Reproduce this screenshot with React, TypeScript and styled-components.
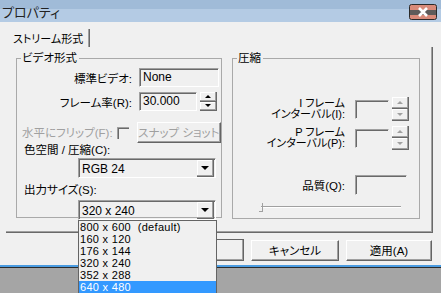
import styled, { createGlobalStyle } from 'styled-components';

const GlobalStyle = createGlobalStyle`
	html, body {
		margin: 0;
		padding: 0;
		background: #a5a5a5;
	}
	* {
		box-sizing: border-box;
	}
`;

const Window = styled.div`
	width: 441px;
	height: 293px;
	overflow: hidden;
	display: flex;
	flex-direction: column;
	background: #a5a5a5;
	font-family: 'Liberation Sans', 'Noto Sans CJK JP', sans-serif;
	font-feature-settings: 'palt';
	font-size: 11.5px;
	color: #000;
`;

const TitleBar = styled.div`
	height: 22px;
	flex: none;
	display: flex;
	align-items: center;
	justify-content: space-between;
	padding: 0 4px 0 2px;
	background: linear-gradient(#a0bbd8 0, #a0bbd8 9px, #b4cbe4 9px, #b4cbe4 100%);
	color: #222;
	font-size: 13px;
`;

const Caption = styled.span`
	margin-top: 1px;
`;

const CloseButton = styled.div`
	width: 28px;
	height: 16px;
	margin-top: 1px;
	display: flex;
`;

const Body = styled.div`
	height: 243px;
	flex: none;
	background: #f0f0f0;
	padding: 7px 0 0 6px;
	display: flex;
	flex-direction: column;
`;

const TabStrip = styled.div`
	height: 18px;
	display: flex;
	padding-left: 7px;
`;

const Tab = styled.div`
	width: 76px;
	height: 18px;
	padding-top: 1px;
	font-size: 11px;
	white-space: nowrap;
	border-right: 1px solid #a0a0a0;
	box-shadow: 1px 0 0 #696969;
`;

const TabPanel = styled.div`
	width: 427px;
	height: 186px;
	border-right: 1px solid #696969;
	border-bottom: 1px solid #696969;
	box-shadow: inset -1px -1px 0 #a0a0a0;
	padding: 4px 0 0 10px;
	display: flex;
	gap: 10px;
`;

const Group = styled.fieldset<{ $w: number; $h: number }>`
	margin: 0;
	padding: 0;
	width: ${(p) => p.$w}px;
	height: ${(p) => p.$h}px;
	border: 1px solid #a9a9a9;
	min-width: 0;
	display: flex;
	flex-direction: column;
`;

const Legend = styled.legend`
	margin-left: 4px;
	padding: 0 2px 0 1px;
	line-height: 14px;
`;

const Row = styled.div<{ $top: number }>`
	display: flex;
	align-items: center;
	margin-top: ${(p) => p.$top}px;
`;

const Label = styled.div<{ $w: number; $gap?: number }>`
	width: ${(p) => p.$w}px;
	margin-right: ${(p) => p.$gap ?? 7}px;
	text-align: right;
	white-space: nowrap;
`;

const StackLabel = styled(Label)`
	line-height: 11px;
	font-size: 11px;
`;

const Caption2 = styled.div<{ $left: number; $dim?: boolean }>`
	padding-left: ${(p) => p.$left}px;
	line-height: 14px;
	white-space: nowrap;
	color: ${(p) => (p.$dim ? '#a0a0a0' : '#000')};
`;

const Edit = styled.div<{ $w: number; $h?: number; $flat?: boolean }>`
	width: ${(p) => p.$w}px;
	height: ${(p) => p.$h ?? 19}px;
	border-top: 1px solid #a0a0a0;
	border-left: 1px solid #a0a0a0;
	border-right: 1px solid ${(p) => (p.$flat ? '#f0f0f0' : '#ffffff')};
	border-bottom: 1px solid ${(p) => (p.$flat ? '#f0f0f0' : '#ffffff')};
	box-shadow: inset 1px 1px 0 #696969;
	background: #f0f0f0;
	padding: 1px 0 0 3px;
	line-height: 15px;
	font-size: 12px;
	white-space: nowrap;
`;

const Spin = styled.div<{ $h: number }>`
	width: 17px;
	height: ${(p) => p.$h}px;
	margin-left: 3px;
	display: flex;
	flex-direction: column;
`;

const SpinHalf = styled.div<{ $dim?: boolean }>`
	flex: 1;
	display: flex;
	align-items: center;
	justify-content: center;
	border-right: 1px solid #696969;
	border-bottom: 1px solid #696969;
	box-shadow: inset -1px -1px 0 #a0a0a0, inset 1px 1px 0 #fff;
	color: ${(p) => (p.$dim ? '#a0a0a0' : '#000')};
`;

const Arrow = styled.div<{ $up?: boolean }>`
	width: 0;
	height: 0;
	border-left: 3px solid transparent;
	border-right: 3px solid transparent;
	${(p) => (p.$up ? 'border-bottom: 3px solid currentColor;' : 'border-top: 3px solid currentColor;')}
`;

const CheckBox = styled.div`
	width: 12px;
	height: 12px;
	margin: 0 8px 0 4px;
	border-top: 1px solid #a0a0a0;
	border-left: 1px solid #a0a0a0;
	box-shadow: inset 1px 1px 0 #696969;
`;

const PushButton = styled.div<{ $w: number; $dim?: boolean; $default?: boolean }>`
	width: ${(p) => p.$w}px;
	height: ${(p) => (p.$default ? 22 : 21)}px;
	display: flex;
	align-items: center;
	justify-content: center;
	border-top: 1px solid ${(p) => (p.$default ? '#646464' : '#ffffff')};
	border-left: 1px solid ${(p) => (p.$default ? '#646464' : '#ffffff')};
	border-right: 1px solid #646464;
	border-bottom: 1px solid #646464;
	box-shadow: inset -1px -1px 0 #a0a0a0;
	color: ${(p) => (p.$dim ? '#a0a0a0' : '#000')};
	white-space: nowrap;
	padding-bottom: 1px;
`;

const ComboWrap = styled.div`
	position: relative;
	margin-left: 61px;
`;

const Combo = styled.div`
	width: 138px;
	height: 20px;
	display: flex;
	align-items: center;
	justify-content: space-between;
	border-top: 1px solid #a0a0a0;
	border-left: 1px solid #a0a0a0;
	border-right: 1px solid #fff;
	border-bottom: 1px solid #fff;
	box-shadow: inset 1px 1px 0 #696969;
	padding: 1px 1px 0 3px;
	font-size: 12px;
`;

const DropButton = styled(SpinHalf)`
	flex: none;
	width: 17px;
	height: 17px;
	margin-top: -1px;
`;

const BigArrow = styled.div`
	width: 0;
	height: 0;
	border-left: 4px solid transparent;
	border-right: 4px solid transparent;
	border-top: 4px solid #000;
`;

const ListBox = styled.div`
	position: absolute;
	left: 0;
	top: 20px;
	width: 139px;
	border: 1px solid #646464;
	background: #f0f0f0;
	z-index: 2;
`;

const ListItem = styled.div<{ $active?: boolean }>`
	height: 12px;
	line-height: 12px;
	padding-left: 1px;
	font-size: 11px;
	letter-spacing: 0.3px;
	white-space: pre;
	overflow: hidden;
	background: ${(p) => (p.$active ? '#3399ff' : 'transparent')};
	color: ${(p) => (p.$active ? '#fff' : '#000')};
`;

const Slider = styled.div`
	position: relative;
	margin: 0 0 0 26px;
	width: 142px;
	height: 9px;
`;

const Track = styled.div`
	position: absolute;
	left: 2px;
	right: 0;
	top: 3px;
	height: 2px;
	border-top: 1px solid #a0a0a0;
	border-bottom: 1px solid #fff;
`;

const Thumb = styled.div`
	position: absolute;
	left: 0;
	top: 0;
	width: 4px;
	height: 9px;
	border-right: 1px solid #a0a0a0;
	border-bottom: 1px solid #a0a0a0;
`;

const ButtonRow = styled.div`
	display: flex;
	justify-content: flex-end;
	align-items: center;
	margin-top: 6px;
	padding-right: 9px;
	gap: 7px;
`;

const BlueLine = styled.div`
	height: 2px;
	flex: none;
	background: #4a9be0;
`;

const DarkLine = styled.div`
	height: 1px;
	flex: none;
	background: #2b2b2b;
`;

const sizes = ['800 x 600  (default)', '160 x 120', '176 x 144', '320 x 240', '352 x 288', '640 x 480'];

function CloseIcon() {
	return (
		<svg width="28" height="16" viewBox="0 0 28 16">
			<rect x="0.5" y="0.5" width="27" height="15" rx="2" fill="#d88a79" stroke="#2a2a2a" />
			<rect x="1" y="6" width="26" height="5" fill="#5e5b5a" />
			<path d="M10 4 L18 12 M18 4 L10 12" stroke="#fff" strokeWidth="2.6" />
		</svg>
	);
}

function SpinBox({ h, dim }: { h: number; dim?: boolean }) {
	return (
		<Spin $h={h}>
			<SpinHalf $dim={dim}>
				<Arrow $up />
			</SpinHalf>
			<SpinHalf $dim={dim}>
				<Arrow />
			</SpinHalf>
		</Spin>
	);
}

function App() {
	return (
		<Window>
			<GlobalStyle />
			<TitleBar>
				<Caption>プロパティ</Caption>
				<CloseButton>
					<CloseIcon />
				</CloseButton>
			</TitleBar>
			<Body>
				<TabStrip>
					<Tab>ストリーム形式</Tab>
				</TabStrip>
				<TabPanel>
					<Group $w={206} $h={167}>
						<Legend>ビデオ形式</Legend>
						<Row $top={3}>
							<Label $w={115}>標準ビデオ:</Label>
							<Edit $w={80}>None</Edit>
						</Row>
						<Row $top={5}>
							<Label $w={115}>フレーム率(R):</Label>
							<Edit $w={58}>30.000</Edit>
							<SpinBox h={19} />
						</Row>
						<Row $top={11}>
							<Caption2 $left={5} $dim>
								水平にフリップ(F):
							</Caption2>
							<CheckBox />
							<PushButton $w={85} $dim>
								スナップ ショット
							</PushButton>
						</Row>
						<Row $top={0}>
							<Caption2 $left={7}>色空間 / 圧縮(C):</Caption2>
						</Row>
						<Row $top={1}>
							<ComboWrap>
								<Combo>
									RGB 24
									<DropButton>
										<BigArrow />
									</DropButton>
								</Combo>
							</ComboWrap>
						</Row>
						<Row $top={5}>
							<Caption2 $left={7}>出力サイズ(S):</Caption2>
						</Row>
						<Row $top={3}>
							<ComboWrap>
								<Combo>
									320 x 240
									<DropButton>
										<BigArrow />
									</DropButton>
								</Combo>
								<ListBox>
									{sizes.map((s, i) => (
										<ListItem key={s} $active={i === sizes.length - 1}>
											{s}
										</ListItem>
									))}
								</ListBox>
							</ComboWrap>
						</Row>
					</Group>
					<Group $w={188} $h={168}>
						<Legend>圧縮</Legend>
						<Row $top={32}>
							<StackLabel $w={112} $gap={10}>
								I フレーム
								<br />
								インターバル(I):
							</StackLabel>
							<Edit $w={34} $flat />
							<SpinBox h={24} dim />
						</Row>
						<Row $top={5}>
							<StackLabel $w={112} $gap={10}>
								P フレーム
								<br />
								インターバル(P):
							</StackLabel>
							<Edit $w={34} $flat />
							<SpinBox h={24} dim />
						</Row>
						<Row $top={25}>
							<Label $w={112} $gap={10}>
								品質(Q):
							</Label>
							<Edit $w={52} $h={20} $flat />
						</Row>
						<Row $top={8}>
							<Slider>
								<Track />
								<Thumb />
							</Slider>
						</Row>
					</Group>
				</TabPanel>
				<ButtonRow>
					<PushButton $w={86} $default>
						OK
					</PushButton>
					<PushButton $w={88}>キャンセル</PushButton>
					<PushButton $w={86}>適用(A)</PushButton>
				</ButtonRow>
			</Body>
			<BlueLine />
			<DarkLine />
		</Window>
	);
}

export default App;
